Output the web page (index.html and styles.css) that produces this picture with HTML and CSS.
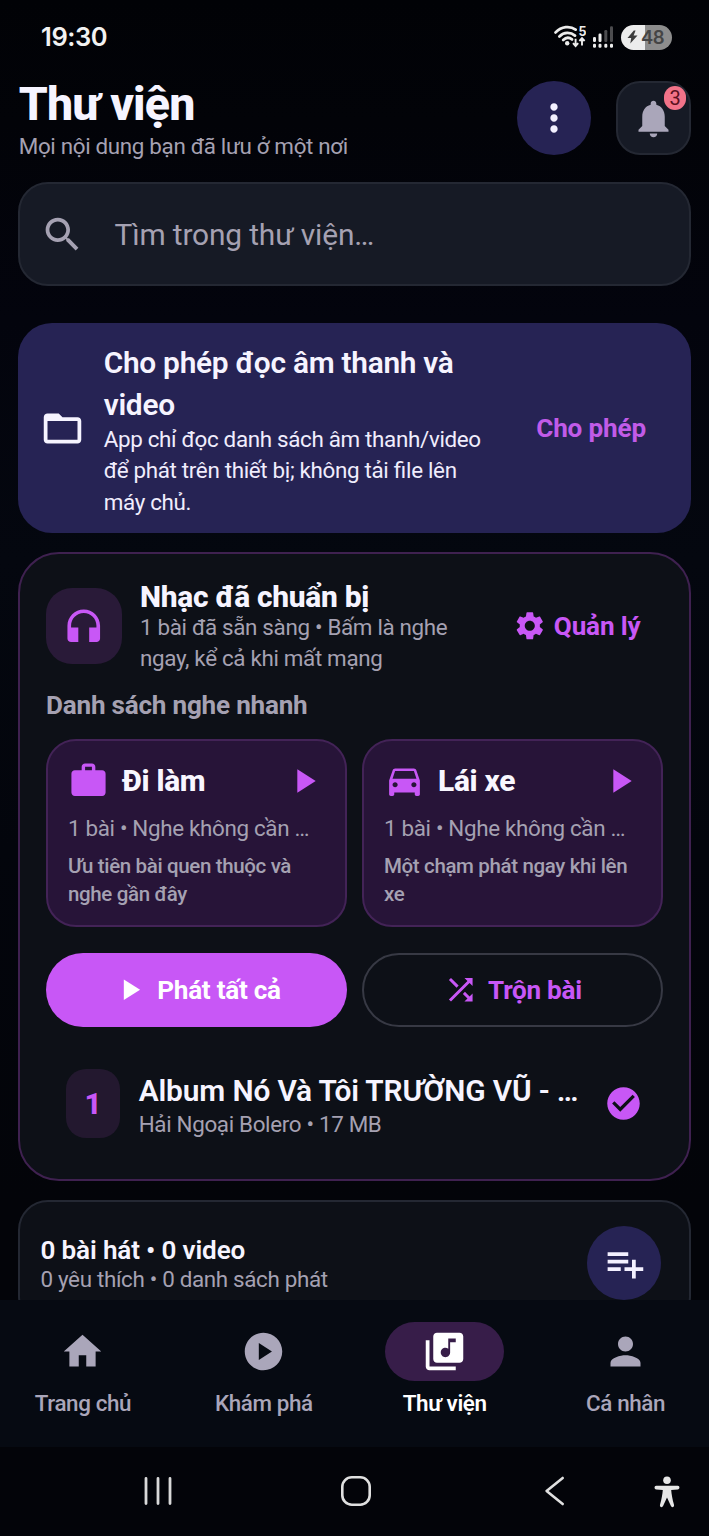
FILE: index.html
```html
<!DOCTYPE html>
<html lang="vi">
<head>
<meta charset="utf-8">
<title>Thư viện</title>
<link rel="stylesheet" href="styles.css">
</head>
<body>
<div class="screen">
  <div class="statusbar">
    <span class="clock">19:30</span>
    <div class="status-icons">
      <svg class="wifi" width="32" height="24" viewBox="0 0 32 24">
        <g fill="none" stroke="#ececec" stroke-width="2.8" stroke-linecap="round">
          <path d="M1.600 7.400C7.500 1.300 16 .6 21.600 4.600"/>
          <path d="M5.400 11.400C10 6.800 16.400 6.800 21 10.600"/>
          <path d="M9.200 15C11.800 12.400 15.200 12.200 18 14.400"/>
        </g>
        <circle cx="13.200" cy="18.200" r="2.200" fill="#ececec"/>
        <path d="M21.600 13.800v6.800M19 18.200l2.600 2.800 2.600-2.800M28 20.600v-6.800M25.400 16l2.600-2.800 2.600 2.800" fill="none" stroke="#ececec" stroke-width="1.900"/>
        <text x="24.400" y="10.500" class="wifi-gen">5</text>
      </svg>
      <svg class="signal" width="22" height="24" viewBox="0 0 22 24">
        <g fill="#ececec"><rect x="1" y="12" width="3" height="5" rx="1.200"/><rect x="6.500" y="8.500" width="3" height="8.500" rx="1.200"/>
        <rect x="1" y="18.800" width="3" height="4" rx="1.200"/><rect x="6.500" y="18.800" width="3" height="4" rx="1.200"/><rect x="12.300" y="18.800" width="3" height="4" rx="1.200"/><rect x="18" y="18.800" width="3" height="4" rx="1.200"/></g>
        <g fill="#4c4c4f"><rect x="12.300" y="5" width="3" height="12" rx="1.200"/><rect x="18" y="1.300" width="3" height="15.700" rx="1.200"/></g>
      </svg>
      <div class="battery">
        <svg width="11" height="14" viewBox="0 0 11 14"><path d="M6.800 .5L.5 8h3.700L3.300 13.500 10.500 5.500H6.600L8.600 .5z" fill="#3c3c3c"/></svg>
        <span>48</span>
      </div>
    </div>
  </div>

  <main class="content">
    <header class="header">
      <div class="header-text">
        <h1>Thư viện</h1>
        <p>Mọi nội dung bạn đã lưu ở một nơi</p>
      </div>
      <button class="round-btn"><svg width="44" height="44" viewBox="0 0 24 24"><path d="M12 8c1.100 0 2-.9 2-2s-.9-2-2-2-2 .9-2 2 .9 2 2 2zm0 2c-1.100 0-2 .9-2 2s.9 2 2 2 2-.9 2-2-.9-2-2-2zm0 6c-1.100 0-2 .9-2 2s.9 2 2 2 2-.9 2-2-.9-2-2-2z"/></svg></button>
      <button class="bell-btn">
        <svg width="45" height="45" viewBox="0 0 24 24"><path d="M12 22c1.100 0 2-.9 2-2h-4c0 1.100.89 2 2 2zm6-6v-5c0-3.070-1.640-5.640-4.500-6.320V4c0-.83-.67-1.500-1.500-1.500s-1.500.67-1.500 1.500v.68C7.630 5.360 6 7.920 6 11v5l-2 2v1h16v-1l-2-2z"/></svg>
        <span class="badge">3</span>
      </button>
    </header>

    <div class="search">
      <svg width="45" height="45" viewBox="0 0 24 24"><path d="M15.500 14h-.79l-.28-.27C15.410 12.590 16 11.110 16 9.500 16 5.910 13.090 3 9.500 3S3 5.910 3 9.500 5.910 16 9.500 16c1.610 0 3.090-.59 4.230-1.570l.27.28v.79l5 4.990L20.490 19l-4.990-5zm-6 0C7.010 14 5 11.990 5 9.500S7.010 5 9.500 5 14 7.010 14 9.500 11.990 14 9.500 14z"/></svg>
      <span>Tìm trong thư viện…</span>
    </div>

    <section class="permission">
      <svg width="45" height="45" viewBox="0 0 24 24"><path d="M20 6h-8l-2-2H4c-1.100 0-1.990.9-1.990 2L2 18c0 1.100.9 2 2 2h16c1.100 0 2-.9 2-2V8c0-1.100-.9-2-2-2zm0 12H4V8h16v10z"/></svg>
      <div class="permission-text">
        <h2>Cho phép đọc âm thanh và<br>video</h2>
        <p>App chỉ đọc danh sách âm thanh/video<br>để phát trên thiết bị; không tải <span class="ligature">fi</span>le lên<br>máy chủ.</p>
      </div>
      <a class="permission-action">Cho phép</a>
    </section>

    <section class="prepared">
      <div class="prepared-head">
        <div class="prepared-icon"><svg width="43.500" height="43.500" viewBox="0 0 24 24"><path d="M12 3c-4.970 0-9 4.030-9 9v7c0 1.100.9 2 2 2h4v-8H5v-1c0-3.870 3.130-7 7-7s7 3.130 7 7v1h-4v8h4c1.100 0 2-.9 2-2v-7c0-4.970-4.030-9-9-9z"/></svg></div>
        <div class="prepared-text">
          <h2>Nhạc đã chuẩn bị</h2>
          <p>1 bài đã sẵn sàng • Bấm là nghe<br>ngay, kể cả khi mất mạng</p>
        </div>
        <a class="manage"><svg width="33.600" height="33.600" viewBox="0 0 24 24"><path d="M19.140 12.940c.04-.3.060-.61.060-.94 0-.32-.02-.64-.07-.94l2.030-1.580c.18-.14.23-.41.120-.61l-1.920-3.320c-.12-.22-.37-.29-.59-.22l-2.390.96c-.5-.38-1.030-.7-1.620-.94l-.36-2.540c-.04-.24-.24-.41-.48-.41h-3.840c-.24 0-.43.17-.47.41l-.36 2.540c-.59.24-1.130.57-1.620.94l-2.390-.96c-.22-.08-.47 0-.59.22L2.740 8.870c-.12.210-.08.470.12.610l2.030 1.580c-.05.3-.09.630-.09.940s.02.640.070.940l-2.030 1.580c-.18.140-.23.410-.12.610l1.920 3.320c.12.220.37.290.59.220l2.390-.96c.5.380 1.030.7 1.620.94l.36 2.540c.05.240.24.410.48.410h3.840c.24 0 .44-.17.470-.41l.36-2.540c.59-.24 1.130-.56 1.620-.94l2.390.96c.22.080.47 0 .59-.22l1.920-3.320c.12-.22.070-.47-.12-.61l-2.010-1.580zM12 15.600c-1.980 0-3.600-1.620-3.600-3.600s1.620-3.600 3.600-3.600 3.600 1.620 3.600 3.600-1.620 3.600-3.600 3.600z"/></svg><span>Quản lý</span></a>
      </div>

      <h3 class="quick-title">Danh sách nghe nhanh</h3>

      <div class="pair quick-list">
        <article class="quick">
          <div class="quick-head">
            <svg width="41" height="41" viewBox="0 0 24 24"><path d="M20 6h-4V4c0-1.110-.89-2-2-2h-4c-1.110 0-2 .89-2 2v2H4c-1.110 0-2 .89-2 2v11c0 1.110.89 2 2 2h16c1.110 0 2-.89 2-2V8c0-1.110-.89-2-2-2zm-6 0h-4V4h4v2z"/></svg>
            <h4>Đi làm</h4>
            <svg width="40" height="40" viewBox="0 0 24 24"><path d="M8 5v14l11-7z"/></svg>
          </div>
          <p class="quick-meta">1 bài • Nghe không cần …</p>
          <p class="quick-desc">Ưu tiên bài quen thuộc và<br>nghe gần đây</p>
        </article>
        <article class="quick">
          <div class="quick-head">
            <svg width="41" height="41" viewBox="0 0 24 24"><path d="M18.920 6.010C18.720 5.420 18.160 5 17.500 5h-11c-.66 0-1.210.42-1.420 1.010L3 12v8c0 .55.45 1 1 1h1c.55 0 1-.45 1-1v-1h12v1c0 .55.45 1 1 1h1c.55 0 1-.45 1-1v-8l-2.080-5.990zM6.500 16c-.83 0-1.500-.67-1.500-1.500S5.670 13 6.500 13s1.500.67 1.500 1.500S7.330 16 6.500 16zm11 0c-.83 0-1.500-.67-1.500-1.500s.67-1.500 1.500-1.500 1.500.67 1.500 1.500-.67 1.500-1.500 1.500zM5 11l1.500-4.500h11L19 11H5z"/></svg>
            <h4>Lái xe</h4>
            <svg width="40" height="40" viewBox="0 0 24 24"><path d="M8 5v14l11-7z"/></svg>
          </div>
          <p class="quick-meta">1 bài • Nghe không cần …</p>
          <p class="quick-desc">Một chạm phát ngay khi lên<br>xe</p>
        </article>
      </div>

      <div class="pair actions">
        <button class="pill play-all"><svg width="35.500" height="35.500" viewBox="0 0 24 24"><path d="M8 5v14l11-7z"/></svg><span>Phát tất cả</span></button>
        <button class="pill shuffle"><svg width="35.500" height="35.500" viewBox="0 0 24 24"><path d="M10.590 9.170L5.410 4 4 5.410l5.170 5.170 1.420-1.410zM14.500 4l2.040 2.040L4 18.590 5.410 20 17.960 7.460 20 9.500V4h-5.500zm.33 9.410l-1.410 1.410 3.130 3.130L14.500 20H20v-5.500l-2.040 2.040-3.130-3.130z"/></svg><span>Trộn bài</span></button>
      </div>

      <div class="track">
        <span class="track-no">1</span>
        <div class="track-text">
          <h4>Album Nó Và Tôi TRƯỜNG VŨ - …</h4>
          <p>Hải Ngoại Bolero • 17 MB</p>
        </div>
        <svg class="track-done" width="39" height="39" viewBox="0 0 24 24"><path d="M12 2C6.480 2 2 6.480 2 12s4.480 10 10 10 10-4.480 10-10S17.520 2 12 2zm-2 15l-5-5 1.410-1.410L10 14.170l7.590-7.590L19 8l-9 9z"/></svg>
      </div>
    </section>

    <section class="summary">
      <div class="summary-text">
        <h4>0 bài hát • 0 video</h4>
        <p>0 yêu thích • 0 danh sách phát</p>
      </div>
      <button class="round-btn"><svg width="45" height="45" viewBox="0 0 24 24"><path d="M14 10H3v2h11v-2zm0-4H3v2h11V6zm4 8v-4h-2v4h-4v2h4v4h2v-4h4v-2h-4zM3 16h7v-2H3v2z"/></svg></button>
    </section>
  </main>

  <nav class="tabs">
    <a class="tab"><span class="tab-icon"><svg width="45" height="45" viewBox="0 0 24 24"><path d="M10 20v-6h4v6h5v-8h3L12 3 2 12h3v8z"/></svg></span><span>Trang chủ</span></a>
    <a class="tab"><span class="tab-icon"><svg width="45" height="45" viewBox="0 0 24 24"><path d="M12 2C6.480 2 2 6.480 2 12s4.480 10 10 10 10-4.480 10-10S17.520 2 12 2zM9.500 16.500v-9l7 4.500-7 4.500z"/></svg></span><span>Khám phá</span></a>
    <a class="tab active"><span class="tab-icon"><svg width="45" height="45" viewBox="0 0 24 24"><path d="M20 2H8c-1.100 0-2 .9-2 2v12c0 1.100.9 2 2 2h12c1.100 0 2-.9 2-2V4c0-1.100-.9-2-2-2zm-2 5h-3v5.500c0 1.380-1.120 2.500-2.500 2.500S10 13.880 10 12.500s1.120-2.500 2.500-2.500c.57 0 1.080.19 1.500.51V5h4v2zM4 6H2v14c0 1.100.9 2 2 2h14v-2H4V6z"/></svg></span><span>Thư viện</span></a>
    <a class="tab"><span class="tab-icon"><svg width="45" height="45" viewBox="0 0 24 24"><path d="M12 12c2.210 0 4-1.790 4-4s-1.790-4-4-4-4 1.790-4 4 1.790 4 4 4zm0 2c-2.670 0-8 1.340-8 4v2h16v-2c0-2.660-5.330-4-8-4z"/></svg></span><span>Cá nhân</span></a>
  </nav>

  <div class="sysnav">
    <svg class="sys-recents" width="30" height="30" viewBox="0 0 30 30"><path d="M3 2.500v25M15 2.500v25M27 2.500v25" stroke="#d9d9d9" stroke-width="2.800" stroke-linecap="round"/></svg>
    <svg class="sys-home" width="32" height="32" viewBox="0 0 32 32"><rect x="2.300" y="2.300" width="27.400" height="27.400" rx="9.500" fill="none" stroke="#e0e0e0" stroke-width="2.600"/></svg>
    <svg class="sys-back" width="22" height="32" viewBox="0 0 22 32"><path d="M18.700 3L2.600 16l16.100 13" fill="none" stroke="#e0e0e0" stroke-width="2.600" stroke-linecap="round" stroke-linejoin="round"/></svg>
    <svg class="sys-a11y" width="28" height="34" viewBox="0 0 28 34"><circle cx="14" cy="5.200" r="3.800" fill="#e6e6e6"/><path d="M3.200 10.800h21.600c2.200 0 2.200 3.600 0 3.700l-6.600.5c.3 4.200 1.200 9.200 2.800 14.800.6 2.600-2.400 3.300-3.200 1L14 22.500l-3.800 8.300c-.8 2.300-3.800 1.600-3.200-1C8.600 24.200 9.500 19.200 9.800 15l-6.600-.5c-2.200-.1-2.200-3.700 0-3.700z" fill="#e6e6e6"/></svg>
  </div>
</div>
</body>
</html>
```
FILE: styles.css
```css
* { box-sizing: border-box; margin: 0; padding: 0; }
body {
  width: 709px;
  height: 1536px;
  overflow: hidden;
  background: #020307;
  font-family: Roboto, "Noto Sans", sans-serif;
  color: #f6f4ff;
}
svg { display: block; flex: none; fill: currentColor; }
button { border: 0; background: none; font: inherit; color: inherit; }
h1, h2, h3, h4, p, span, a { white-space: nowrap; }
p { font-size: 22.4px; line-height: 31.5px; letter-spacing: -0.33px; color: #a5a1b2; }
.ligature { letter-spacing: 0; }

.screen {
  display: flex;
  flex-direction: column;
  width: 709px;
  height: 1536px;
  background: linear-gradient(#010206 0, #020308 120px, #03040d 320px, #04070f 560px, #03050c 850px, #030409 1200px);
}

.statusbar {
  display: flex;
  justify-content: space-between;
  align-items: center;
  height: 74px;
  padding: 0 37px 0 41px;
}
.clock { font: 600 25.5px/30px Inter, Roboto, sans-serif; letter-spacing: -0.4px; color: #f2f2f2; }
.status-icons { display: flex; align-items: center; }
.wifi-gen { font: 700 12.5px Inter, sans-serif; fill: #ececec; }
.signal { margin: 0 7px 0 6px; }
.battery {
  display: flex;
  align-items: center;
  gap: 3px;
  width: 51px;
  height: 25px;
  padding-left: 6px;
  border-radius: 13px;
  background: linear-gradient(90deg, #ececec 24.500px, #8d8d8d 24.500px);
  font: 600 18.500px/25px Inter, sans-serif;
  letter-spacing: -0.6px;
  color: #454545;
}

.content {
  display: flex;
  flex-direction: column;
  height: 1226px;
  padding: 3px 18px 0;
  overflow: hidden;
}
.header { display: flex; align-items: flex-start; flex: none; height: 105px; }
.header-text { flex: 1; padding-left: 0.700px; }
h1 { font-size: 46.500px; line-height: 54px; font-weight: 800; letter-spacing: -0.85px; }
.round-btn, .bell-btn {
  display: flex;
  align-items: center;
  justify-content: center;
  width: 74px;
  height: 74px;
}
.round-btn { border-radius: 50%; background: #262354; color: #f3f0ff; }
.bell-btn {
  position: relative;
  width: 75px;
  margin-left: 25px;
  border: 2px solid #242833;
  border-radius: 24px;
  background: #161a25;
  color: #aaa6ba;
}
.header .round-btn, .bell-btn { margin-top: 4px; }
.badge {
  position: absolute;
  top: 3px;
  right: 3px;
  width: 22px;
  height: 24px;
  border-radius: 11px;
  background: #f27389;
  color: #5a1020;
  font-size: 20px;
  line-height: 24px;
  text-align: center;
}

.search {
  display: flex;
  align-items: center;
  flex: none;
  gap: 29.500px;
  height: 104px;
  padding-left: 20px;
  border: 2px solid #242833;
  border-radius: 30px;
  background: #161a25;
  color: #a5a1b2;
  font-size: 29.900px;
  letter-spacing: -0.15px;
}

.permission {
  display: flex;
  align-items: center;
  flex: none;
  height: 210px;
  margin-top: 37px;
  padding: 0 45px 0 22px;
  border-radius: 34px;
  background: #262354;
}
.permission-text { flex: 1; margin-left: 18.700px; padding-top: 4px; }
.permission h2 { font-size: 29.870px; line-height: 42.600px; font-weight: 600; letter-spacing: -0.27px; }
.permission p { margin-top: -3px; color: #f0edfd; }
.permission-action { font-size: 26.100px; font-weight: 700; letter-spacing: -0.15px; color: #c15be8; }

.prepared {
  flex: none;
  height: 629px;
  margin-top: 19px;
  padding: 26px 26px 0;
  border: 2px solid #3f2150;
  border-radius: 41px;
  background: #0d1017;
}
.prepared-head { display: flex; align-items: center; height: 92px; }
.prepared-icon {
  display: flex;
  align-items: center;
  justify-content: center;
  width: 75.500px;
  height: 75.500px;
  border-radius: 26px;
  background: #291a38;
  color: #c857f6;
}
.prepared-text { flex: 1; margin-left: 18.500px; padding-top: 2px; }
.prepared-text h2 { font-size: 29.900px; line-height: 34px; font-weight: 800; letter-spacing: -0.28px; margin-bottom: -2px; }
.manage {
  display: flex;
  align-items: center;
  gap: 7px;
  margin-right: 22.500px;
  font-size: 26.100px;
  font-weight: 700;
  letter-spacing: -0.15px;
  color: #c857f6;
}
.quick-title { margin-top: 15px; font-size: 26.100px; line-height: 36px; font-weight: 700; letter-spacing: -0.22px; color: #a5a1b2; }

.pair { display: grid; grid-template-columns: 1fr 1fr; gap: 15px; }
.quick-list { margin-top: 16px; }
.quick {
  height: 188px;
  padding: 18.500px 21px 0 20px;
  border: 2px solid #432357;
  border-radius: 30px;
  background: #271438;
}
.quick-head { display: flex; align-items: center; height: 42px; color: #c857f6; }
.quick-head h4 { flex: 1; margin-left: 13px; font-size: 29.900px; font-weight: 800; letter-spacing: -0.3px; color: #f9f7ff; }
.quick-meta { margin-top: 11.500px; }
.quick-desc { margin-top: 7px; font-size: 20.500px; line-height: 28px; font-weight: 500; letter-spacing: -0.36px; }

.actions { margin-top: 25.500px; }
.pill {
  display: flex;
  align-items: center;
  justify-content: center;
  gap: 9.500px;
  height: 74px;
  border-radius: 37px;
  font-size: 26.100px;
  font-weight: 700;
  letter-spacing: -0.26px;
}
.play-all { background: #c857f6; color: #fff; }
.shuffle { border: 2px solid #373944; color: #c857f6; }

.track { display: flex; align-items: center; height: 69px; margin-top: 42.500px; padding: 0 20px; }
.track-no {
  width: 54px;
  height: 69px;
  border-radius: 20px;
  background: #23182f;
  color: #c857f6;
  font-size: 29.900px;
  line-height: 69px;
  font-weight: 800;
  text-align: center;
}
.track-text { flex: 1; margin-left: 18.700px; padding-top: 6px; }
.track-text h4 { font-size: 29.900px; line-height: 36px; font-weight: 600; letter-spacing: -0.15px; }
.track-done { color: #c857f6; }

.summary {
  display: flex;
  align-items: center;
  justify-content: space-between;
  flex: none;
  height: 126px;
  margin-top: 19px;
  padding: 0 28px 0 20.500px;
  border: 2px solid #242833;
  border-radius: 30px;
  background: #0d1017;
}
.summary-text { padding-top: 5px; }
.summary h4 { font-size: 26.100px; line-height: 28px; font-weight: 600; letter-spacing: -0.16px; }

.tabs {
  display: grid;
  grid-template-columns: repeat(4, 1fr);
  gap: 15px;
  height: 147px;
  padding: 22px 0.500px 0 0;
  background: #060a12;
}
.tab {
  display: flex;
  flex-direction: column;
  align-items: center;
  gap: 5.500px;
  color: #aaa6ba;
  font-size: 22.400px;
  line-height: 31px;
  font-weight: 500;
  letter-spacing: -0.4px;
}
.tab-icon {
  display: flex;
  align-items: center;
  justify-content: center;
  width: 119px;
  height: 59px;
  margin-bottom: 1px;
  border-radius: 30px;
}
.tab.active { color: #fff; font-weight: 600; }
.tab.active .tab-icon { background: #371d49; }

.sysnav { display: flex; align-items: center; height: 89px; padding: 0 0 2px 143px; background: #030409; }
.sys-home { margin-left: 167px; }
.sys-back { margin-left: 172px; }
.sys-a11y { margin: 3px 0 0 87px; }
```
